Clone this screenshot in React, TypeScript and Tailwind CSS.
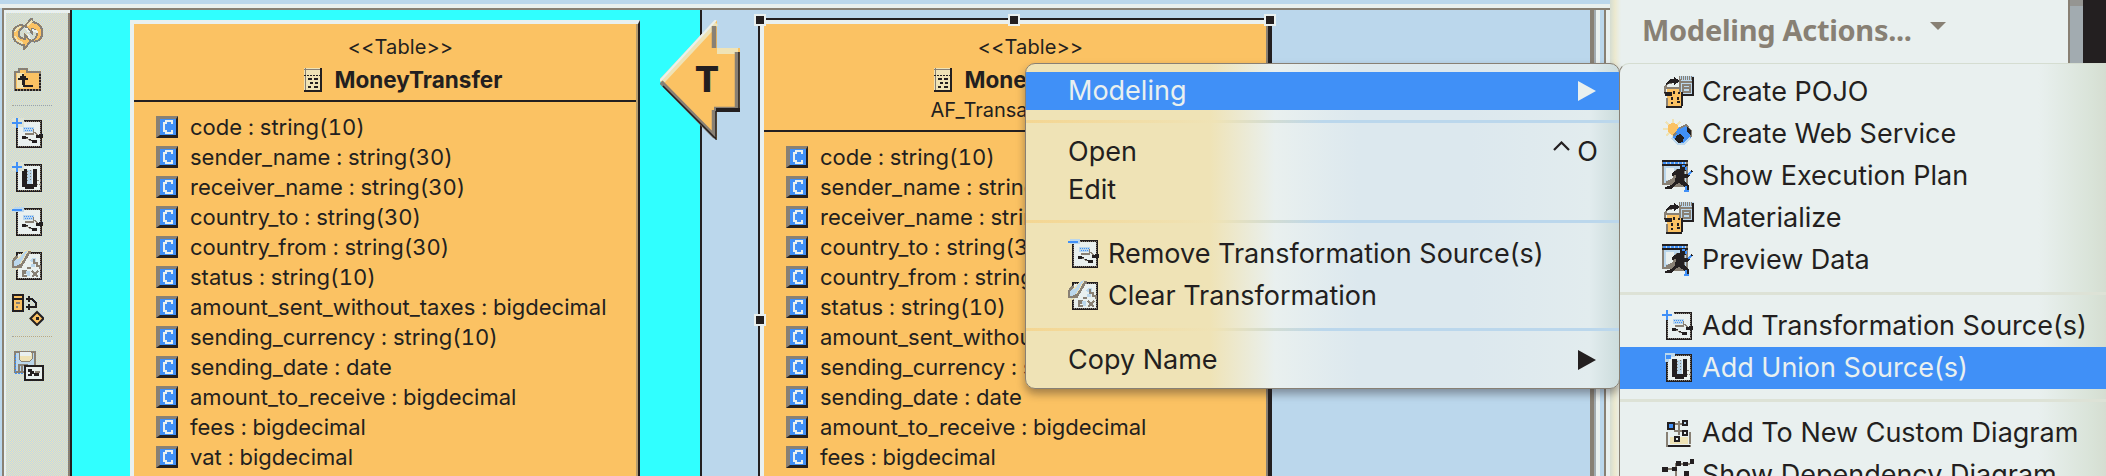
import type { ReactNode } from "react";

const K = "#231f20";
const W = "#e9f0ef";
const B = "#4090f7";
const L = "#bbd7ec";
const O = "#fbc263";
const C = "#efe3b6";
const G = "#888074";

function Icon({ children, w = 32, h = 32 }: { children: ReactNode; w?: number; h?: number }) {
  return (
    <svg width={w} height={h} viewBox={`0 0 ${w} ${h}`} className="block shrink-0" shapeRendering="crispEdges">
      {children}
    </svg>
  );
}

function Frame() {
  return (
    <>
      <rect x="5" y="3" width="24" height="26" fill={W} stroke={K} strokeWidth="2" />
      <rect x="5.500" y="3.500" width="23" height="25" fill="none" stroke={G} strokeWidth="1" strokeDasharray="1 1" />
    </>
  );
}

function Mapping() {
  return (
    <>
      <path d="M11 9h11v5H11z" fill={L} />
      <path d="M12 10h9M13 12h8" stroke={B} strokeDasharray="1 1" />
      <path d="M13 16h9M21.500 11v6" stroke={G} strokeWidth="1.500" />
      <path d="M10 18h4v1h2v2h3v1h6v3h-5v-2h-3v-2h-7z M24 17h3v-1h4v4h-7z" fill={K} />
      <path d="M14 20l5 3M22 14l4 3" stroke={G} strokeWidth="1" fill="none" />
    </>
  );
}

function AddSource() {
  return (
    <Icon>
      <Frame />
      <path d="M0 0h12v9H0z" fill="#dde3d6" />
      <Mapping />
      <path d="M5 0v10M0 5h10" stroke={B} strokeWidth="2" />
    </Icon>
  );
}

function AddSourceMenu() {
  return (
    <Icon>
      <Frame />
      <path d="M0 0h12v10H0z" fill={W} />
      <Mapping />
      <path d="M5 0v10M0 5h10" stroke={B} strokeWidth="2" />
    </Icon>
  );
}

function RemoveSource() {
  return (
    <Icon>
      <Frame />
      <path d="M2 1h10v5H2z" fill={L} />
      <Mapping />
      <path d="M0 4h10" stroke={B} strokeWidth="2" />
    </Icon>
  );
}

function Union({ selected = false }: { selected?: boolean }) {
  return (
    <Icon>
      <Frame />
      <path d="M14 8h6v14h-6z" fill={L} />
      <path d="M15 9v12M18 8v12" stroke={G} strokeDasharray="1 2" />
      <path d="M10 7h5v15h6V7h4v18h-3v2h-9v-2h-3z" fill={K} />
      <path d="M25 18h3v4h-3" stroke={G} strokeDasharray="2 1" fill="none" />
      {selected ? (
        <path d="M3 1h10v4H9v2H7v3H3z" fill={L} />
      ) : (
        <>
          <path d="M0 0h12v9H0z" fill="#dde3d6" />
          <path d="M5 0v10M0 5h10" stroke={B} strokeWidth="2" />
        </>
      )}
      {selected && <path d="M4 3h5v4H4z" fill={B} />}
    </Icon>
  );
}

function Clear() {
  return (
    <Icon>
      <Frame />
      <path d="M3 10L14 0h5L10 17l-6 3-4-5z" fill={C} />
      <path d="M3 9h4l5-7 4-2-8 14-4 5-4-3z" fill={L} />
      <path d="M18 1L8 18M5 6L1 11v6h4l4-2" stroke={G} strokeWidth="2.500" fill="none" />
      <path d="M17 11l3-3h4v4h-4z M15 16h4v-2h4v3" fill={L} />
      <path d="M22 9v4h3v3h3v3M10 21h4v2h-3v3h4M20 21l6 6M26 21l-6 6M15 18h4" stroke={G} strokeWidth="1.500" fill="none" />
      <path d="M14 21h4v5h-3z" fill={L} />
    </Icon>
  );
}

function Refresh() {
  return (
    <Icon>
      <path d="M20 0v4C27 5 31 9 30 16c0 5-5 9-10 7 5-3 7-8 3-11l-3-1v4l-7-7z" fill={O} stroke={G} strokeWidth="2" />
      <path d="M12 31v-4C4 26 0 21 1 14 2 9 7 6 12 8 7 11 5 17 9 20l4 1v-4l6 6z" fill={O} stroke={G} strokeWidth="2" />
      <path d="M3 14c1-3 4-5 6-5M3 18c1 4 4 6 8 7M15 8l5-5" stroke={C} strokeWidth="2" fill="none" />
      <path d="M14 10l3 4M16 16l2 5M20 12l6 2" stroke={W} strokeWidth="2" />
    </Icon>
  );
}

function FolderUp() {
  return (
    <Icon>
      <path d="M3 6h4V3h8v3h13v18H3z" fill={O} stroke={G} strokeWidth="2" />
      <path d="M5 7h7v15H5z" fill={C} />
      <path d="M3 24h25V7" stroke={K} strokeWidth="2" fill="none" strokeDasharray="2 1" />
      <path d="M6 12h2v-2h2V8h2v2h2v2h2v2h-3v5h8v2H11v-2h-1v-5H6z" fill={K} />
    </Icon>
  );
}

function Dependency() {
  return (
    <Icon>
      <rect x="1" y="1" width="10" height="16" fill={O} stroke={K} strokeWidth="2" />
      <path d="M2 5h8" stroke={K} strokeWidth="1.500" />
      <path d="M4 9h4M4 13h2" stroke={G} strokeWidth="2" />
      <path d="M14 5h6l4 4v5M14 13h11M17 2v6M17 10v6" stroke={K} strokeWidth="2" fill="none" />
      <path d="M25 18l6.500 6.500-6.500 6.500-6.500-6.500z" fill={O} stroke={K} strokeWidth="2" shapeRendering="auto" />
      <rect x="24" y="23" width="3" height="3" fill={K} />
    </Icon>
  );
}

function SaveDiagram() {
  return (
    <Icon>
      <path d="M3 1h20v20H3z" fill={L} stroke={G} strokeWidth="1.500" />
      <path d="M7 1h13v7l-2 2H9L7 8z" fill={C} stroke={G} />
      <path d="M8 1h11v4H8z" fill={W} />
      <path d="M7 21v-7h9M10 20v-5" stroke={G} strokeWidth="1.500" fill="none" />
      <path d="M3 4v18h9" stroke={B} strokeWidth="1" fill="none" strokeDasharray="2 1" />
      <rect x="13" y="15" width="18" height="14" fill={W} stroke={K} strokeWidth="2" />
      <path d="M16 18h4v2h2v2h5v3h-5v-2h-2v2h-4v-2h2v-2h-2z" fill={K} />
      <path d="M23 21h5" stroke={G} strokeWidth="1.500" />
    </Icon>
  );
}

function Materialize() {
  return (
    <Icon>
      <rect x="17" y="0" width="15" height="18" fill={L} />
      <path d="M17 1h14M17 3h14" stroke={G} strokeDasharray="1 1" strokeWidth="2" />
      <path d="M17 6h14" stroke={G} strokeWidth="2" />
      <path d="M31 1v18H20" stroke={K} strokeWidth="2" fill="none" />
      <path d="M18 3v12M21 9h7v7h-7zM21 12h7" stroke={G} strokeWidth="2" fill="none" />
      <path d="M3 9l6-4h5v5H8l-3 8H2z" fill={W} />
      <path d="M3 18v-7l3-4h4" stroke={G} strokeWidth="2" fill="none" />
      <path d="M4 8l4-5h4V1l6 4-6 4V7H8L4 9zM4 16h8v6H6v-2H3z" fill={K} />
      <rect x="5" y="13" width="14" height="17" fill={O} />
      <path d="M4 12h14v4M5 22v8" stroke={G} strokeWidth="2" fill="none" />
      <path d="M20 16v14M4 31h16M12 15v3M16 17h2M10 21v3M16 21v3M10 26v2M15 26h3" stroke={K} strokeWidth="2" />
      <path d="M2 16h8v4H4z" fill={K} />
    </Icon>
  );
}

function WebService() {
  return (
    <Icon>
      <path d="M11 1v20M1 11h20M4 4l14 14M18 4L4 18" stroke={C} strokeWidth="2.500" />
      <path d="M11 5v12M6 11h11M7 7l8 8M15 7l-8 8" stroke={O} strokeWidth="4" />
      <path d="M16 10l8-3 5 5v8l-7 6-8-1-3-6z" fill={B} />
      <path d="M18 10l6-3 5 6v6M11 18l3-3" stroke={G} strokeWidth="2" fill="none" />
      <path d="M25 8l4 5v4l-4-3z M14 18l4-2 4 3-1 5-4 1-4-3z" fill={K} />
      <path d="M10 20l6 6h6l6-6" stroke={L} strokeWidth="2" fill="none" />
    </Icon>
  );
}

function Runner() {
  return (
    <Icon>
      <rect x="1" y="1" width="24" height="23" fill={L} stroke={G} strokeWidth="2" />
      <path d="M4 8h8v12H4z" fill={W} />
      <path d="M0 1h26M0 5h26" stroke={K} strokeWidth="2" />
      <path d="M1 3h22" stroke={B} strokeWidth="2" strokeDasharray="3 1" />
      <path d="M3 22l8-4v-6l4-3h8v18H10z" fill={G} />
      <path d="M18 5h6v6h-2v3h3l4-4 2 1-5 7h-4v3l5 4v6h-4v-4l-6-4-4 2-3 4H3v-2l6-2 4-4 1-6-4 1v-3l6-4h2z" fill={K} />
      <path d="M20 6h3M24 7v3M24 26v4M22 31h5M26 15l3-3" stroke={B} strokeWidth="1.500" />
    </Icon>
  );
}

function CustomDiagram() {
  return (
    <Icon>
      <path d="M5 15v14h24M28 15v12M10 7h14M17 4v14M12 14h10" stroke={G} strokeWidth="2" fill="none" />
      <path d="M8 20h18v7H8z" fill={C} />
      <path d="M6 29h22" stroke={K} strokeWidth="2" />
      <rect x="5.500" y="5.500" width="6" height="6" fill={B} stroke={K} strokeWidth="2" />
      <rect x="21" y="4" width="4" height="4" fill={L} stroke={K} strokeWidth="2" />
      <rect x="21" y="14" width="4" height="4" fill={W} stroke={K} strokeWidth="2" />
      <rect x="13" y="20" width="4" height="4" fill={W} stroke={K} strokeWidth="2" />
    </Icon>
  );
}

function DependencyDiagram() {
  return (
    <Icon>
      <path d="M4 10h10V5h14M14 10v12h12" stroke={G} strokeWidth="2" fill="none" />
      <path d="M0 8h6v5H0zM10 8h5v4h-5zM14 2h5v5h-5zM21 3h5v4h-5zM28 0h4v5h-4zM22 12h5v5h-5z" fill={K} />
    </Icon>
  );
}

function TableIcon() {
  return (
    <Icon w={18} h={24}>
      <rect width="18" height="24" fill={C} />
      <path d="M0 1h18M1 0v24" stroke={G} strokeWidth="1" />
      <path d="M0 7h18" stroke={K} strokeDasharray="2 1" strokeWidth="1" />
      <path d="M17 0v24M0 23h18" stroke={K} strokeWidth="2" />
      <path d="M4 11h4M10 11h4M6 15h3M11 15h3M4 19h3M10 19h4" stroke={K} strokeWidth="2" />
    </Icon>
  );
}

function ColumnIcon() {
  return (
    <span className="flex h-[22px] w-[22px] shrink-0 items-center justify-center border-t-[3px] border-r-2 border-b-[3px] border-l-4 border-t-[#888074] border-r-[#231f20] border-b-[#231f20] border-l-[#888074] bg-[#4090f7]">
      <Icon w={14} h={16}>
        <path d="M11 5V2H5v2H3v8h2v2h6v-3" stroke={W} strokeWidth="2" fill="none" />
      </Icon>
    </span>
  );
}

const columns = [
  "code : string(10)",
  "sender_name : string(30)",
  "receiver_name : string(30)",
  "country_to : string(30)",
  "country_from : string(30)",
  "status : string(10)",
  "amount_sent_without_taxes : bigdecimal",
  "sending_currency : string(10)",
  "sending_date : date",
  "amount_to_receive : bigdecimal",
  "fees : bigdecimal",
  "vat : bigdecimal",
];

function TableBody({ name, subtitle }: { name: string; subtitle?: string }) {
  return (
    <>
      <div className="flex flex-col items-center pt-[11px] pl-[31px]">
        <div className="h-6 text-[20px] leading-[24px] tracking-[0.1px]">&lt;&lt;Table&gt;&gt;</div>
        <div className="mt-[5px] flex h-[32px] items-center gap-[13px] pl-[5px]">
          <TableIcon />
          <span className="text-[22.5px] leading-[32px] font-bold">{name}</span>
        </div>
        {subtitle && (
          <div className="-mt-[1px] h-[30px] w-[200px] text-[20px] leading-[30px] whitespace-nowrap">{subtitle}</div>
        )}
      </div>
      <div className={subtitle ? "mt-[5px] h-[2px] bg-[#231f20]" : "mt-[4px] h-[2px] bg-[#231f20]"} />
      <ul className="pt-[10px] pl-[22px]">
        {columns.map((c) => (
          <li key={c} className="flex h-[30px] items-center gap-[12px] text-[22px] leading-[30px] whitespace-nowrap tabular-nums">
            <ColumnIcon />
            {c}
          </li>
        ))}
      </ul>
    </>
  );
}

function Handle({ className }: { className: string }) {
  return <div className={`absolute h-3 w-3 border-2 border-[#e9f0ef] bg-[#231f20] ${className}`} />;
}

function Separator({ className }: { className: string }) {
  return <div className={`h-[3px] shrink-0 ${className}`} />;
}

function Item({ icon, label, selected, className = "" }: { icon: ReactNode; label: string; selected?: boolean; className?: string }) {
  return (
    <div
      className={`flex h-[42px] shrink-0 items-center whitespace-nowrap ${selected ? "bg-[#4090f7] text-[#e9f0ef]" : ""} ${className}`}
    >
      {icon}
      <span className="ml-[8px]">{label}</span>
    </div>
  );
}

function Arrow({ className }: { className: string }) {
  return (
    <svg width="18" height="20" viewBox="0 0 18 20" className={`block ${className}`}>
      <path d="M0 0L18 10L0 20z" fill="currentColor" />
    </svg>
  );
}

function Dots({ className }: { className: string }) {
  return <div className={`h-px w-[40px] ${className} border-t border-dotted border-[#888074]/60`} />;
}

export default function App() {
  return (
    <div className="relative flex h-[476px] w-[2106px] overflow-hidden bg-[#bbd7ec] font-['Inter','Liberation_Sans',sans-serif] text-[#231f20]">
      <div className="flex w-[1610px] shrink-0 flex-col">
        <div className="h-2 shrink-0 border-b-4 border-[#e9f0ef] pb-1" />
        <div className="ml-[2px] flex flex-1 border-t-2 border-l-2 border-[#888074]">
          <aside className="flex w-[68px] shrink-0 flex-col border-r-2 border-l-2 border-r-[#231f20] border-l-[#e9f0ef] bg-[conic-gradient(#bbd7ec_25%,#efe3b6_25%_50%,#bbd7ec_50%_75%,#efe3b6_75%)] bg-[size:2px_2px]">
            <div className="h-[3px] bg-[#e9f0ef]" />
            <div className="flex flex-1 flex-col border-r-2 border-[#888074] pl-[6px]">
              <div className="mt-[5px]"><Refresh /></div>
              <div className="mt-[16px]"><FolderUp /></div>
              <Dots className="mt-[7px]" />
              <div className="mt-[12px]"><AddSource /></div>
              <div className="mt-[12px]"><Union /></div>
              <div className="mt-[12px]"><RemoveSource /></div>
              <div className="mt-[12px]"><Clear /></div>
              <div className="mt-[12px]"><Dependency /></div>
              <Dots className="mt-[10px]" />
              <div className="mt-[14px]"><SaveDiagram /></div>
            </div>
          </aside>

          <main className="relative flex-1 overflow-hidden">
            <div className="h-full w-[630px] border-r-2 border-[#231f20] bg-[#30ffff]" />

            <section className="absolute top-[10px] left-[58px] h-[480px] w-[510px] border-t-4 border-r-2 border-l-4 border-t-[#e9f0ef] border-r-[#231f20] border-l-[#e9f0ef] bg-[#fbc263]">
              <div className="h-full border-r-2 border-[#888074]/60">
                <TableBody name="MoneyTransfer" />
              </div>
            </section>

            <svg className="absolute top-[10px] left-[588px]" width="80" height="120" viewBox="0 0 80 120">
              <path d="M0 61L57 0V28H80V92H57V120z" fill={O} />
              <path d="M2 61L56 3M57 31H78" stroke={C} strokeWidth="6" fill="none" />
              <path d="M0 61L56 0" stroke={W} strokeWidth="2" fill="none" />
              <path d="M54 6V28M1 62L55 117M54 90V116M54 89H76M77 32V90" stroke={G} strokeWidth="4.500" fill="none" />
              <path d="M3 66L56 119V91M79 90V32" stroke={K} strokeWidth="1.500" fill="none" />
              <path d="M56 90H80" stroke={K} strokeWidth="4" />
              <text x="47" y="72" textAnchor="middle" fontSize="36" fontWeight="800" fill={K} className="font-['Inter',sans-serif]">T</text>
            </svg>

            <section className="absolute top-[8px] left-[686px] h-[480px] w-[514px] border-t-2 border-r-4 border-l-2 border-[#231f20] bg-[#fbc263]">
              <div className="h-full border-t-4 border-r-2 border-l-4 border-t-[#e9f0ef] border-r-[#888074] border-l-[#e9f0ef]">
                <TableBody name="MoneyTransfer" subtitle="AF_Transactions" />
              </div>
            </section>
            <Handle className="top-[4px] left-[682px]" />
            <Handle className="top-[4px] left-[936px]" />
            <Handle className="top-[4px] left-[1192px]" />
            <Handle className="top-[304px] left-[682px]" />

            <div className="absolute top-0 right-0 flex h-full">
              <div className="w-1 bg-[#888074]" />
              <div className="w-[2px] bg-[#a2abb0]" />
              <div className="w-1 bg-[#e9f0ef]" />
              <div className="w-1 bg-[#bbd7ec]" />
              <div className="w-[2px] bg-[#888074]" />
              <div className="w-1 bg-[#e9f0ef]" />
            </div>
          </main>
        </div>
      </div>

      <div className="flex flex-1 bg-[linear-gradient(to_right,#d5ddd1_0px,#ece9cf_5px,#e9f0ef_11px)]">
        <div className="flex h-[60px] w-[458px] items-center pl-[32px] font-['Noto_Sans','Open_Sans',sans-serif] text-[29px] font-bold tracking-[-0.3px] text-[#888074]">
          <span className="whitespace-nowrap">Modeling Actions...</span>
          <svg width="16" height="8" viewBox="0 0 16 8" className="-mt-[8px] ml-[18px] block">
            <path d="M0 0H16L8 8z" fill={G} />
          </svg>
        </div>
        <div className="h-[64px] w-[2px] bg-[#888074]" />
        <div className="h-[64px] w-[13px] border-t-[6px] border-[#888074]/50 bg-[#a2abb0]" />
        <div className="h-[64px] flex-1 bg-[#231f20]" />
      </div>

      <div className="absolute top-[63px] left-[1025px] flex h-[326px] w-[595px] flex-col overflow-hidden rounded-[10px] border border-[#888074] bg-[linear-gradient(to_right,#efe3b6_0%,#efe3b6_31%,#e9f0ef_42%,#dce8ee_56%,#dce8ee_75%,#e2ecee_95%,#ccdcdc_100%)] text-[27px] leading-[40px] shadow-[0_5px_8px_rgba(35,31,32,0.4)]">
        <div className="mt-[8px] flex h-[38px] shrink-0 items-center justify-between bg-[#4090f7] pr-[23px] pl-[42px] text-[#e9f0ef]">
          <span>Modeling</span>
          <Arrow className="" />
        </div>
        <Separator className="mt-[10px] bg-[linear-gradient(to_right,#f4d692_0%,#efe3b6_32%,#bbd7ec_50%,#bbd7ec_100%)]" />
        <div className="mt-[9px] flex h-[40px] shrink-0 items-center justify-between pr-[21px] pl-[42px]">
          <span>Open</span>
          <span className="flex items-center gap-[7px]">
            <svg width="17" height="10" viewBox="0 0 17 10" className="-mt-[12px]">
              <path d="M1 9L8.500 1.500L16 9" stroke={K} strokeWidth="2.200" fill="none" />
            </svg>
            O
          </span>
        </div>
        <div className="-mt-[2px] flex h-[40px] shrink-0 items-center pl-[42px]">Edit</div>
        <Separator className="mt-[10px] bg-[linear-gradient(to_right,#f4d692_0%,#efe3b6_32%,#bbd7ec_50%,#bbd7ec_100%)]" />
        <Item icon={<RemoveSource />} label="Remove Transformation Source(s)" className="mt-[10px] pl-[42px]" />
        <Item icon={<Clear />} label="Clear Transformation" className="pl-[42px]" />
        <Separator className="mt-[11px] bg-[linear-gradient(to_right,#f4d692_0%,#efe3b6_32%,#bbd7ec_50%,#bbd7ec_100%)]" />
        <div className="mt-[10px] flex h-[38px] shrink-0 items-center justify-between pr-[23px] pl-[42px]">
          <span>Copy Name</span>
          <Arrow className="" />
        </div>
      </div>

      <div className="absolute top-[63px] left-[1619px] flex h-[440px] w-[487px] flex-col rounded-tl-[10px] border-t border-l border-t-[#d5ddd1] border-l-[#888074] bg-[linear-gradient(to_right,#e9f0ef_0%,#e9f0ef_86%,#d9e3d8_97%,#d5ddd1_100%)] text-[27px] leading-[40px]">
        <Item icon={<Materialize />} label="Create POJO" className="mt-[7px] pl-[42px]" />
        <Item icon={<WebService />} label="Create Web Service" className="pl-[42px]" />
        <Item icon={<Runner />} label="Show Execution Plan" className="pl-[42px]" />
        <Item icon={<Materialize />} label="Materialize" className="pl-[42px]" />
        <Item icon={<Runner />} label="Preview Data" className="pl-[42px]" />
        <Separator className="mt-[11px] bg-[#dde2d6]" />
        <Item icon={<AddSourceMenu />} label="Add Transformation Source(s)" className="mt-[10px] pl-[42px]" />
        <Item icon={<Union selected />} label="Add Union Source(s)" selected className="pl-[42px]" />
        <Separator className="mt-[10px] bg-[#dde2d6]" />
        <Item icon={<CustomDiagram />} label="Add To New Custom Diagram" className="mt-[10px] pl-[42px]" />
        <Item icon={<DependencyDiagram />} label="Show Dependency Diagram" className="pl-[42px]" />
      </div>
    </div>
  );
}
